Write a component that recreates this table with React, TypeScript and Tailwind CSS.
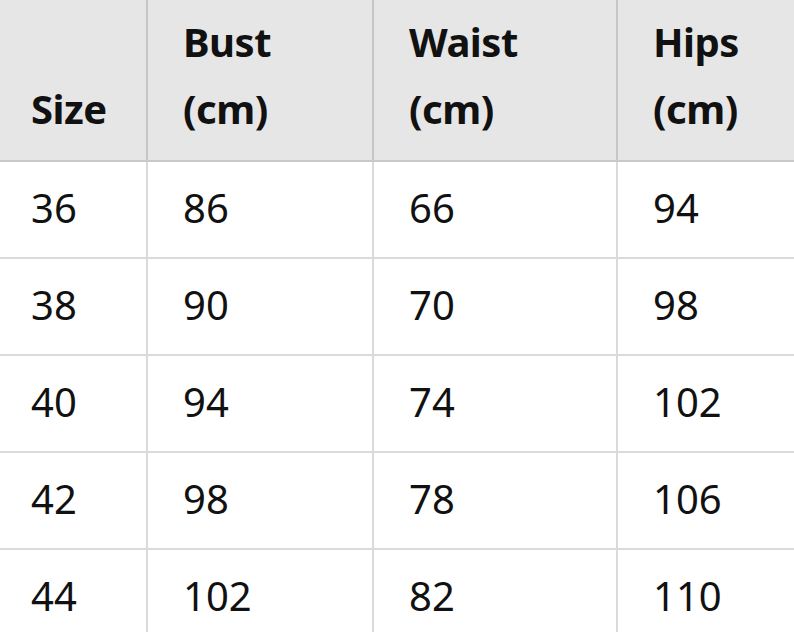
const header = ["Size", "Bust\n(cm)", "Waist\n(cm)", "Hips\n(cm)"];

const rows = [
  ["36", "86", "66", "94"],
  ["38", "90", "70", "98"],
  ["40", "94", "74", "102"],
  ["42", "98", "78", "106"],
  ["44", "102", "82", "110"],
];

const widths = ["w-[148px]", "w-[226px]", "w-[244px]", "w-[176px]"];
const pads = ["pl-[31px]", "pl-[35px]", "pl-[35px]", "pl-[35px]"];

export default function App() {
  return (
    <div
      className="w-[794px] h-[632px] overflow-hidden bg-white text-[#111]"
      style={{ fontFamily: '"Noto Sans", "Open Sans", sans-serif' }}
    >
      <div className="flex h-[162px] bg-[#e6e6e6] border-b-2 border-[#c9c9c9]">
        {header.map((h, i) => (
          <div
            key={i}
            className={`${widths[i]} ${pads[i]} ${
              i < 3 ? "border-r-2 border-[#c6c6c6]" : ""
            } flex items-end pb-[18px] text-[40px] leading-[67px] font-bold whitespace-pre-line tracking-[-0.5px]`}
          >
            {h}
          </div>
        ))}
      </div>
      {rows.map((r, ri) => (
        <div key={ri} className="flex h-[97px] border-b-2 border-[#dadada]">
          {r.map((c, ci) => (
            <div
              key={ci}
              className={`${widths[ci]} ${pads[ci]} ${
                ci < 3 ? "border-r-2 border-[#dadada]" : ""
              } flex items-center pb-[4px] text-[40px] font-normal`}
            >
              {c}
            </div>
          ))}
        </div>
      ))}
    </div>
  );
}
